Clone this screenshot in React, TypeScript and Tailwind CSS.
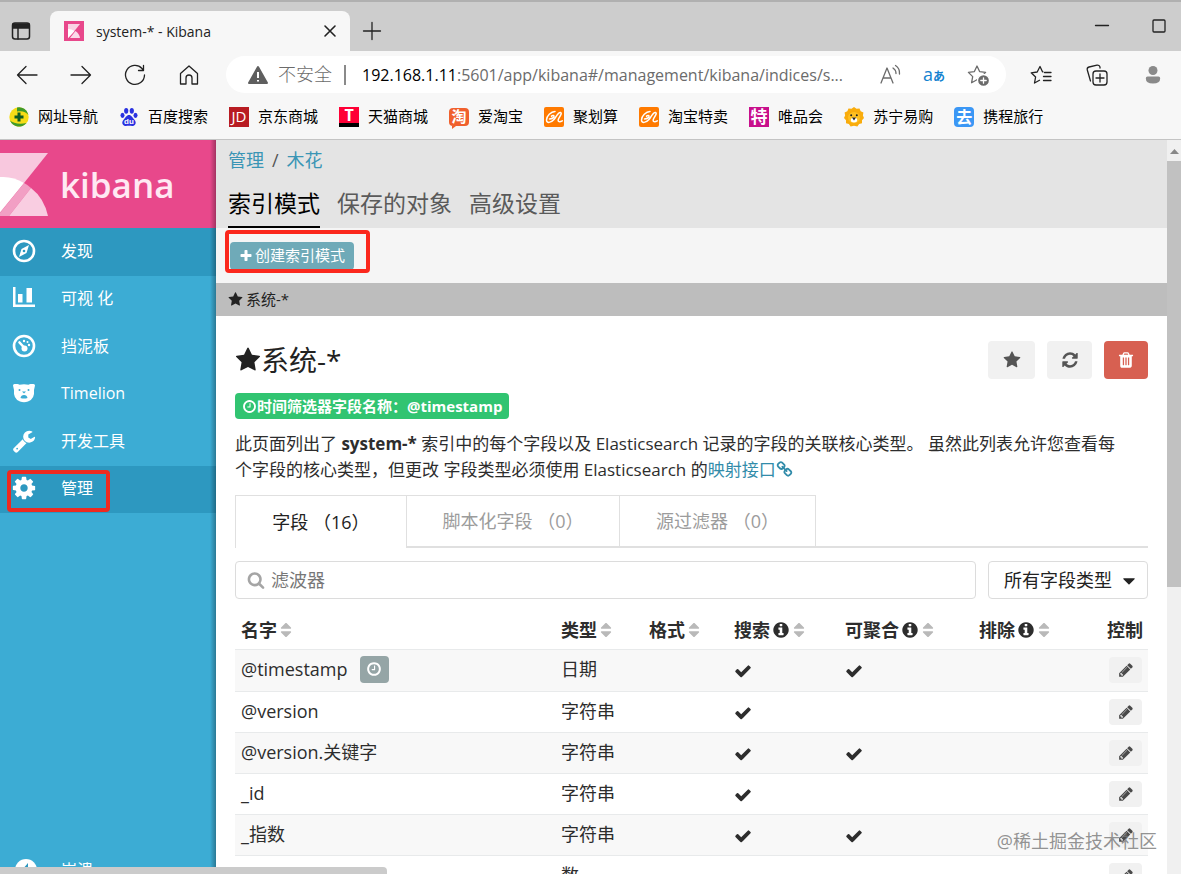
import type { ReactNode } from "react";

const paths = {
  check:
    "M1671 566q0 40-28 68l-724 724-136 136q-28 28-68 28t-68-28l-136-136-362-362q-28-28-28-68t28-68l136-136q28-28 68-28t68 28l294 295 656-657q28-28 68-28t68 28l136 136q28 28 28 68z",
  plus:
    "M1600 736v192q0 40-28 68t-68 28h-416v416q0 40-28 68t-68 28h-192q-40 0-68-28t-28-68v-416h-416q-40 0-68-28t-28-68v-192q0-40 28-68t68-28h416v-416q0-40 28-68t68-28h192q40 0 68 28t28 68v416h416q40 0 68 28t28 68z",
  star:
    "M1728 647q0 22-26 48l-363 354 86 500q1 7 1 20 0 21-10.5 35.5t-30.5 14.5q-19 0-40-12l-449-236-449 236q-22 12-40 12-21 0-31.5-14.5t-10.5-35.5q0-6 2-20l86-500-364-354q-25-27-25-48 0-37 56-46l502-73 225-455q19-41 49-41t49 41l225 455 502 73q56 9 56 46z",
  trash:
    "M704 1376v-704q0-14-9-23t-23-9h-64q-14 0-23 9t-9 23v704q0 14 9 23t23 9h64q14 0 23-9t9-23zm256 0v-704q0-14-9-23t-23-9h-64q-14 0-23 9t-9 23v704q0 14 9 23t23 9h64q14 0 23-9t9-23zm256 0v-704q0-14-9-23t-23-9h-64q-14 0-23 9t-9 23v704q0 14 9 23t23 9h64q14 0 23-9t9-23zm-544-992h448l-48-117q-7-9-17-11h-317q-10 2-17 11zm928 32v64q0 14-9 23t-23 9h-96v948q0 83-47 143.5t-113 60.5h-832q-66 0-113-58.5t-47-141.5v-952h-96q-14 0-23-9t-9-23v-64q0-14 9-23t23-9h309l70-167q15-37 54-63t79-26h320q40 0 79 26t54 63l70 167h309q14 0 23 9t9 23z",
  refresh:
    "M1639 1056q0 5-1 7-64 268-268 434.5t-478 166.5q-146 0-282.5-55t-243.5-157l-129 129q-19 19-45 19t-45-19-19-45v-448q0-26 19-45t45-19h448q26 0 45 19t19 45-19 45l-137 137q71 66 161 102t187 36q134 0 250-65t186-179q11-17 53-117 8-23 30-23h192q13 0 22.5 9.5t9.5 22.5zm25-800v448q0 26-19 45t-45 19h-448q-26 0-45-19t-19-45 19-45l138-138q-148-137-349-137-134 0-250 65t-186 179q-11 17-53 117-8 23-30 23h-199q-13 0-22.5-9.5t-9.5-22.5v-7q65-268 270-434.5t480-166.5q146 0 284 55.5t245 156.5l130-129q19-19 45-19t45 19 19 45z",
  clock:
    "M1024 544v448q0 14-9 23t-23 9h-320q-14 0-23-9t-9-23v-64q0-14 9-23t23-9h224v-352q0-14 9-23t23-9h64q14 0 23 9t9 23zm416 352q0-148-73-273t-198-198-273-73-273 73-198 198-73 273 73 273 198 198 273 73 273-73 198-198 73-273zm224 0q0 209-103 385.5t-279.5 279.5-385.5 103-385.5-103-279.5-279.5-103-385.5 103-385.5 279.5-279.5 385.5-103 385.5 103 279.5 279.5 103 385.5z",
  info:
    "M1152 1376v-160q0-14-9-23t-23-9h-96v-512q0-14-9-23t-23-9h-320q-14 0-23 9t-9 23v160q0 14 9 23t23 9h96v320h-96q-14 0-23 9t-9 23v160q0 14 9 23t23 9h448q14 0 23-9t9-23zm-128-896v-160q0-14-9-23t-23-9h-192q-14 0-23 9t-9 23v160q0 14 9 23t23 9h192q14 0 23-9t9-23zm640 416q0 209-103 385.5t-279.5 279.5-385.5 103-385.5-103-279.5-279.5-103-385.5 103-385.5 279.5-279.5 385.5-103 385.5 103 279.5 279.5 103 385.5z",
  pencil:
    "M491 1536l91-91-235-235-91 91v107h128v128h107zm523-928q0-22-22-22-10 0-17 7l-542 542q-7 7-7 17 0 22 22 22 10 0 17-7l542-542q7-7 7-17zm-54-192l416 416-832 832h-416v-416zm683 96q0 53-37 90l-166 166-416-416 166-165q36-38 90-38 53 0 91 38l235 234q37 39 37 91z",
  search:
    "M1216 832q0-185-131.5-316.5t-316.5-131.5-316.5 131.5-131.5 316.5 131.5 316.5 316.5 131.5 316.5-131.5 131.5-316.5zm512 832q0 52-38 90t-90 38q-54 0-90-38l-343-342q-179 124-399 124-143 0-273.5-55.5t-225-150-150-225-55.5-273.5 55.5-273.5 150-225 225-150 273.5-55.5 273.5 55.5 225 150 150 225 55.5 273.5q0 220-124 399l343 343q37 37 37 90z",
  sort:
    "M1408 1088q0 26-19 45l-448 448q-19 19-45 19t-45-19l-448-448q-19-19-19-45t19-45 45-19h896q26 0 45 19t19 45zm0-384q0 26-19 45t-45 19h-896q-26 0-45-19t-19-45 19-45l448-448q19-19 45-19t45 19l448 448q19 19 19 45z",
  caret: "M1408 704q0 26-19 45l-448 448q-19 19-45 19t-45-19l-448-448q-19-19-19-45t19-45 45-19h896q26 0 45 19t19 45z",
  link:
    "M1520 1216q0-40-28-68l-208-208q-28-28-68-28-42 0-72 32 3 3 19 18.5t21.5 21.5 15 19 13 25.5 3.5 27.5q0 40-28 68t-68 28q-15 0-27.5-3.5t-25.5-13-19-15-21.5-21.5-18.5-19q-33 31-33 73 0 40 28 68l206 207q27 27 68 27 40 0 68-26l147-146q28-28 28-67zm-703-705q0-40-28-68l-206-207q-28-28-68-28-39 0-68 27l-147 146q-28 28-28 67 0 40 28 68l208 208q27 27 68 27 42 0 72-31-3-3-19-18.5t-21.5-21.5-15-19-13-25.5-3.5-27.5q0-40 28-68t68-28q15 0 27.5 3.5t25.5 13 19 15 21.5 21.5 18.5 19q33-31 33-73zm895 705q0 120-85 203l-147 146q-83 83-203 83-121 0-204-85l-206-207q-83-83-83-203 0-123 88-209l-88-88q-86 88-208 88-120 0-204-84l-208-208q-84-84-84-204t85-203l147-146q83-83 203-83 121 0 204 85l206 207q83 83 83 203 0 123-88 209l88 88q86-88 208-88 120 0 204 84l208 208q84 84 84 204z",
  wrench:
    "M448 1472q0-26-19-45t-45-19-45 19-19 45 19 45 45 19 45-19 19-45zm644-420l-682 682q-37 37-90 37-52 0-91-37l-106-108q-38-36-38-90 0-53 38-91l681-681q39 98 114.5 173.5t173.5 114.5zm634-435q0 39-23 106-47 134-164.5 217.5t-258.5 83.5q-185 0-316.5-131.5t-131.5-316.5 131.5-316.5 316.5-131.5q58 0 121.5 16.5t107.5 46.5q16 11 16 28t-16 28l-293 169v224l193 107q5-3 79-48.5t135.5-81 70.5-35.5q15 0 23.5 10t8.5 25z",
  gear:
    "M1152 896q0-106-75-181t-181-75-181 75-75 181 75 181 181 75 181-75 75-181zm512-109v222q0 12-8 23t-20 13l-185 28q-19 54-39 91 35 50 107 138 10 12 10 25t-9 23q-27 37-99 108t-94 71q-12 0-26-9l-138-108q-44 23-91 38-16 136-29 186-7 28-36 28h-222q-14 0-24.5-8.5t-11.5-21.5l-28-184q-49-16-90-37l-141 107q-10 9-25 9-14 0-25-11-126-114-165-168-7-10-7-23 0-12 8-23 15-21 51-66.5t54-70.5q-27-50-41-99l-183-27q-13-2-21-12.5t-8-23.5v-222q0-12 8-23t19-13l186-28q14-46 39-92-40-57-107-138-10-12-10-24 0-10 9-23 26-36 98.5-107.5t94.5-71.5q13 0 26 10l138 107q44-23 91-38 16-136 29-186 7-28 36-28h222q14 0 24.5 8.5t11.5 21.5l28 184q49 16 90 37l142-107q9-9 24-9 13 0 25 10 129 119 165 170 7 8 7 22 0 12-8 23-15 21-51 66.5t-54 70.5q26 50 41 98l183 28q13 2 21 12.5t8 23.5z",
};

function Glyph({ name, className = "size-4" }: { name: keyof typeof paths; className?: string }) {
  return (
    <svg viewBox="0 0 1792 1792" className={`inline-block shrink-0 ${className}`} fill="currentColor" aria-hidden="true">
      <path d={paths[name]} />
    </svg>
  );
}

function Line({ children, className = "size-6", width = 1.3 }: { children: ReactNode; className?: string; width?: number }) {
  return (
    <svg
      viewBox="0 0 24 24"
      className={`shrink-0 ${className}`}
      fill="none"
      stroke="currentColor"
      strokeWidth={width}
      strokeLinecap="round"
      strokeLinejoin="round"
      aria-hidden="true"
    >
      {children}
    </svg>
  );
}

const starOutline = "M11 3l2.6 5.6 6 .8-4.4 4.2 1.1 6.1-5.300-3-5.400 3 1.100-6.100L2.400 9.400l6-.8z";

/* ── Bookmark icons ── */

function AliIcon() {
  return (
    <svg viewBox="0 0 20 20" className="size-5" aria-hidden="true">
      <rect width="20" height="20" rx="2" fill="#ff7a00" />
      <path
        d="M11 4.500C7 4.500 2.500 9 2.500 13c0 3.500 4.500 3 7.500-.5 2.500-3 4-7.500 6.500-7 2.200.6-1.500 5-2.200 7-.8 2.600 1.700 2.600 4 1.300M5.500 12c2.500-.2 5-1.500 4.500-3-.3-.8-1.500-.6-2.500.2"
        fill="none"
        stroke="#fff"
        strokeWidth="1.500"
        strokeLinecap="round"
      />
    </svg>
  );
}

function NavSiteIcon() {
  return (
    <svg viewBox="0 0 20 20" className="size-5" aria-hidden="true">
      <circle cx="10" cy="10" r="9.700" fill="#f6dc17" />
      <path d="M8 .5A9.700 9.700 0 0 1 19.500 8c-2.500-3-6-4.500-11.500-3.500z" fill="#3f9a2a" />
      <path d="M1 13.500c3 3 10 4 16.500 2.500A9.700 9.700 0 0 1 1 13.500z" fill="#3f9a2a" />
      <path d="M10 5.500v9M5.500 10h9" stroke="#0d5a23" strokeWidth="3" />
    </svg>
  );
}

function BaiduIcon() {
  return (
    <svg viewBox="0 0 20 20" className="size-5" fill="#2a32e0" aria-hidden="true">
      <ellipse cx="7.200" cy="3.800" rx="2.100" ry="2.900" />
      <ellipse cx="12.800" cy="3.800" rx="2.100" ry="2.900" />
      <ellipse cx="3.500" cy="8.300" rx="2" ry="2.600" />
      <ellipse cx="16.500" cy="8.300" rx="2" ry="2.600" />
      <path d="M10 8c2.500 0 3.200 2.500 5 4.200 2 1.900 2.200 4 1 5.600-1.400 1.800-3.800 1-6 1s-4.600.8-6-1c-1.200-1.600-1-3.700 1-5.600C6.800 10.500 7.500 8 10 8z" />
      <text x="10" y="17" textAnchor="middle" fontSize="8" fontWeight="700" fill="#fff" fontFamily="Liberation Sans, sans-serif">
        du
      </text>
    </svg>
  );
}

function LionIcon() {
  return (
    <svg viewBox="0 0 20 20" className="size-5" aria-hidden="true">
      <path
        d="M10 0l2.500 1.700 3-.3 1.200 2.800 2.700 1.400-.5 3L20 11l-2 2.200v3l-2.900.9-1.700 2.500L10 18.800l-3.400.8-1.700-2.500-2.900-.9v-3L0 11l1.100-2.400-.5-3 2.700-1.400 1.200-2.800 3 .3z"
        fill="#f9ac0c"
      />
      <ellipse cx="10" cy="10.500" rx="6" ry="5.500" fill="#ffc021" />
      <ellipse cx="10" cy="13" rx="3.200" ry="2.500" fill="#fff" />
      <circle cx="7.200" cy="8.300" r="1" fill="#222" />
      <circle cx="12.800" cy="8.300" r="1" fill="#222" />
      <path d="M8 10.600h4L10 13.500z" fill="#222" />
    </svg>
  );
}

function TaobaoIcon() {
  return (
    <span className="relative flex h-[18px] w-5 items-center justify-center rounded bg-[#f0602d] text-[15px] leading-none font-bold text-white">
      淘
      <span className="absolute top-full left-[3px] border-t-3 border-r-4 border-t-[#f0602d] border-r-transparent" />
    </span>
  );
}

const tile = "flex size-5 items-center justify-center overflow-hidden leading-none text-white";

const bookmarks: { label: string; icon: ReactNode }[] = [
  { label: "网址导航", icon: <NavSiteIcon /> },
  { label: "百度搜索", icon: <BaiduIcon /> },
  { label: "京东商城", icon: <span className={`${tile} bg-[#b81c22] text-[15px]`}>JD</span> },
  { label: "天猫商城", icon: <span className={`${tile} border-b-4 border-black bg-[#ff0036] text-[16px] font-bold`}>T</span> },
  { label: "爱淘宝", icon: <TaobaoIcon /> },
  { label: "聚划算", icon: <AliIcon /> },
  { label: "淘宝特卖", icon: <AliIcon /> },
  { label: "唯品会", icon: <span className={`${tile} bg-[#c8108c] text-[17px] font-bold`}>特</span> },
  { label: "苏宁易购", icon: <LionIcon /> },
  { label: "携程旅行", icon: <span className={`${tile} rounded-sm bg-[#3b97f5] text-[16px] font-bold`}>去</span> },
];

/* ── Browser chrome ── */

function TabStrip() {
  return (
    <div className="flex h-[51px] items-end border-t-2 border-[#b0b0b0] bg-[#cdcdcd]">
      <button aria-label="标签页操作" className="flex h-10 w-[50px] items-center pl-[9px]">
        <Line width={1.5}>
          <rect x="3.500" y="4" width="17" height="16" rx="2.500" />
          <path d="M4 5h16v4H4z" fill="currentColor" />
          <path d="M9 9v11" />
        </Line>
      </button>
      <div className="flex h-10 w-[300px] items-center rounded-t-lg bg-[#f7f7f7] pr-2 pl-[14px]">
        <svg viewBox="0 0 20 20" className="size-5" aria-hidden="true">
          <path fill="#e8488b" d="M0 0h20v20H0z" />
          <path fill="#f9d3e4" d="M4 3h12L8 13l-4 4z" />
          <path fill="#fff" d="M4 8q4 0 6.500 2L4 17z" />
          <path fill="#fbdcea" d="M11.500 10q4 3 4.500 7H6z" />
        </svg>
        <span className="ml-3 flex-1 text-[14px] text-[#222]">system-* - Kibana</span>
        <button aria-label="关闭标签页">
          <Line width={1.6}>
            <path d="M7 7l10 10M17 7L7 17" />
          </Line>
        </button>
      </div>
      <button aria-label="新建标签页" className="flex h-10 w-11 items-center justify-center">
        <Line>
          <path d="M12 3.500v17M3.500 12h17" />
        </Line>
      </button>
      <div className="mb-[13px] ml-auto flex">
        <button aria-label="最小化" className="flex w-[70px] justify-center">
          <Line>
            <path d="M5.500 11.500h13" />
          </Line>
        </button>
        <button aria-label="最大化" className="flex w-11 justify-center">
          <Line>
            <rect x="6" y="6" width="12" height="12" rx="1" />
          </Line>
        </button>
      </div>
    </div>
  );
}

function Toolbar() {
  const nav = "flex h-9 w-[54px] items-center justify-center";
  return (
    <div className="flex h-[47px] items-center bg-[#f7f7f7] text-[#222]">
      <button aria-label="返回" className={nav}>
        <Line><path d="M22 12H2.500M11 3.500L2.500 12l8.500 8.500" /></Line>
      </button>
      <button aria-label="前进" className={nav}>
        <Line><path d="M2 12h19.500M13 3.500l8.500 8.500-8.500 8.500" /></Line>
      </button>
      <button aria-label="刷新" className={nav}>
        <Line><path d="M21.500 12A9.500 9.500 0 1 1 19 5.500l1.500 2M20.500 2.500v5h-5" /></Line>
      </button>
      <button aria-label="主页" className={nav}>
        <Line>
          <path d="M3.500 10.500L12 3l8.500 7.500V21H15v-6a3 3 0 0 0-6 0v6H3.500z" />
        </Line>
      </button>
      <div className="mr-[7px] ml-[10px] flex h-[37px] min-w-0 flex-1 items-center rounded-full bg-white pl-[22px] text-[#6b6b6b]">
        <svg viewBox="0 0 20 20" className="size-5 shrink-0" aria-hidden="true">
          <path d="M10 2l9 16H1z" fill="#5f5f5f" stroke="#5f5f5f" strokeWidth="2" strokeLinejoin="round" />
          <path d="M10 7v6M10 15v1.500" stroke="#fff" strokeWidth="2" />
        </svg>
        <span className="ml-[10px] shrink-0 text-[18px] font-light">不安全</span>
        <span className="mx-3 h-5 w-0.5 shrink-0 bg-[#8a8a8a]" />
        <span className="min-w-0 flex-1 truncate pl-1 text-[16px]">
          <span className="text-black">192.168.1.11</span>:5601/app/kibana#/management/kibana/indices/s...
        </span>
        <button aria-label="大声朗读" className="flex w-11 justify-center">
          <Line>
            <path d="M3 20L9 5l6 15M5 15h8M15 5q3 2 3 5.500M17.500 2.500q4.500 3 4 8.500" />
          </Line>
        </button>
        <button aria-label="翻译" className="w-11 text-[#1482d0]">
          <span className="text-[18px]">a</span>
          <span className="text-[12px] font-bold">あ</span>
        </button>
        <button aria-label="添加到收藏夹" className="mr-[6px] flex w-11 justify-center">
          <Line>
            <path d={starOutline} />
            <circle cx="17.500" cy="17.500" r="6" fill="#6b6b6b" stroke="#fff" />
            <path d="M17.500 14.800v5.400M14.800 17.500h5.400" stroke="#fff" />
          </Line>
        </button>
      </div>
      <button aria-label="收藏夹" className="flex w-14 justify-center">
        <Line>
          <path d="M14 8.800h-.5L11 3.500 8.200 9l-6 .8 4.400 4.200-1.100 6 5-2.700M15.500 9.500H22M14.500 13.500H22M14.500 17.500H22" />
        </Line>
      </button>
      <button aria-label="集锦" className="flex w-14 justify-center">
        <Line>
          <rect x="8" y="8" width="14" height="14" rx="3" />
          <path d="M15 11v8M11 15h8M5.500 18L2.300 7a2.500 2.500 0 0 1 1.800-3L12 2.200a2.500 2.500 0 0 1 3 2V5" />
        </Line>
      </button>
      <button aria-label="个人资料" className="flex w-14 justify-center text-[#8a8a8a]">
        <svg viewBox="0 0 24 24" className="size-6" fill="currentColor" aria-hidden="true">
          <circle cx="12" cy="7.500" r="4.500" />
          <path d="M6.500 13.500h11q1.700 0 1.700 1.700 0 5.300-7.200 5.300t-7.200-5.300q0-1.700 1.700-1.700z" />
        </svg>
      </button>
    </div>
  );
}

function BookmarkBar() {
  return (
    <nav aria-label="收藏夹栏" className="flex h-[42px] items-center gap-[21px] border-b border-[#c4c4c4] bg-[#f7f7f7] pb-1 pl-[9px]">
      {bookmarks.map((b) => (
        <a key={b.label} href="#" className="flex shrink-0 items-center gap-[9px] text-[15px] text-black">
          {b.icon}
          {b.label}
        </a>
      ))}
    </nav>
  );
}

/* ── Kibana sidebar ── */

const sideItems: { label: string; icon: ReactNode; active?: boolean; marked?: boolean }[] = [
  {
    label: "发现",
    active: true,
    icon: (
      <Line width={2.6}>
        <circle cx="12" cy="12" r="10" />
        <path d="M17 6l-2.500 8L7 18l2.500-8z" fill="currentColor" stroke="none" />
        <circle cx="12" cy="12" r="1.300" fill="#2d98c0" stroke="none" />
      </Line>
    ),
  },
  {
    label: "可视 化",
    icon: (
      <svg viewBox="0 0 24 24" className="size-6" fill="currentColor" aria-hidden="true">
        <path d="M1 1h2.500v17.500H23V21H1zM6 8h4.500v8.500H6zM14.500 2H20v14.500h-5.500z" />
      </svg>
    ),
  },
  {
    label: "挡泥板",
    icon: (
      <Line width={2.6}>
        <circle cx="12" cy="12" r="10" />
        <path d="M7.500 8.500l5 5.500" />
        <circle cx="12.500" cy="14.500" r="3" fill="currentColor" stroke="none" />
        <circle cx="12" cy="7" r="1.200" fill="currentColor" stroke="none" />
        <circle cx="17" cy="11" r="1.200" fill="currentColor" stroke="none" />
        <circle cx="15.500" cy="8" r="1" fill="currentColor" stroke="none" />
      </Line>
    ),
  },
  {
    label: "Timelion",
    icon: (
      <svg viewBox="0 0 24 24" className="size-6" aria-hidden="true">
        <path
          d="M1 4.500Q1 3 2.500 3h3q1 0 2 .8 4.500-1 9 0 1-.8 2-.8h3Q23 3 23 4.500L22 9q1 9-6 11.500-4 1.500-8 0Q1 18 2 9z"
          fill="#fff"
        />
        <circle cx="7.500" cy="9" r="1" fill="#3cacd4" />
        <circle cx="16.500" cy="9" r="1" fill="#3cacd4" />
        <path d="M9.500 5.500h5M10 10.500h4L12 12.500zM8.500 17q.5-3 3.500-3t3.500 3q-3.500 1-7 0z" fill="#3cacd4" />
      </svg>
    ),
  },
  { label: "开发工具", icon: <Glyph name="wrench" className="size-6" /> },
  { label: "管理", icon: <Glyph name="gear" className="size-[26px]" />, active: true, marked: true },
];

function Sidebar() {
  return (
    <aside className="relative flex w-[216px] shrink-0 flex-col overflow-hidden bg-[#3cacd4] text-[16px] text-white">
      <div className="flex h-[88px] shrink-0 items-center bg-[#e8488b]">
        <svg viewBox="0 0 48 63" className="h-[63px] w-12" aria-hidden="true">
          <path d="M0 0h48L24 30 0 60z" fill="#f8c8de" />
          <path d="M0 24q13-1 24 6L0 59z" fill="#fff" />
          <path d="M24 30q4 2 7 5L9 63H0v-3z" fill="#f29fc4" />
          <path d="M31 35q13 10 17 28H9z" fill="#f9cde1" />
        </svg>
        <span className="ml-3 text-[35px] leading-none font-semibold text-[#ffe9f3]">kibana</span>
      </div>
      <nav aria-label="Kibana" className="grid h-[285px] shrink-0 grid-rows-6">
        {sideItems.map((item) => (
          <a
            key={item.label}
            href="#"
            className={`relative flex items-center pb-[2px] ${item.active ? "bg-[#2d98c0]" : ""}`}
          >
            <span className="flex w-[61px] justify-start pl-3">
              <span className="flex w-6 justify-center">{item.icon}</span>
            </span>
            {item.label}
            {item.marked && (
              <span className="absolute top-1 left-[7px] h-[42px] w-[103px] rounded border-4 border-[#ee2a20]" />
            )}
          </a>
        ))}
      </nav>
      <a href="#" className="mt-auto -mb-5 flex h-12 shrink-0 items-center">
        <span className="flex w-[61px] pl-[14px]">
          <svg viewBox="0 0 24 24" className="size-6" aria-hidden="true">
            <circle cx="12" cy="12" r="11" fill="#fff" />
            <path d="M14 5l-6 7 6 7z" fill="#2d98c0" />
          </svg>
        </span>
        崩溃
      </a>
      <span className="absolute inset-y-0 right-0 w-[6px] bg-linear-to-r from-transparent to-black/30" />
    </aside>
  );
}

/* ── Index pattern page ── */

const columns = [
  { label: "名字", sort: true },
  { label: "类型", sort: true, width: "w-[88px]" },
  { label: "格式", sort: true, width: "w-[85px]" },
  { label: "搜索", sort: true, info: true, width: "w-[111px]" },
  { label: "可聚合", sort: true, info: true, width: "w-[134px]" },
  { label: "排除", sort: true, info: true, width: "w-[128px]" },
  { label: "控制", width: "w-[47px]" },
];

const rows = [
  { name: "@timestamp", type: "日期", searchable: true, aggregatable: true, time: true },
  { name: "@version", type: "字符串", searchable: true },
  { name: "@version.关键字", type: "字符串", searchable: true, aggregatable: true },
  { name: "_id", type: "字符串", searchable: true },
  { name: "_指数", type: "字符串", searchable: true, aggregatable: true },
  { name: "", type: "数" },
];

function FieldTable() {
  const cell = "px-[6px] pt-[6px] pb-2";
  return (
    <table className="mt-3 w-full table-fixed text-left text-[18px] leading-[26px] text-[#2d2d2d]">
      <thead>
        <tr className="h-[38px]">
          {columns.map((c) => (
            <th key={c.label} scope="col" className={`px-[6px] font-bold whitespace-nowrap ${c.width ?? ""}`}>
              <span className="flex items-center">
                {c.label}
                {c.info && <Glyph name="info" className="ml-[2px] size-[18px]" />}
                {c.sort && <Glyph name="sort" className="size-[18px] text-[#b9b9b9]" />}
              </span>
            </th>
          ))}
        </tr>
      </thead>
      <tbody>
        {rows.map((r) => (
          <tr key={r.name} className="border-t border-[#e8eaeb] odd:bg-[#f8f8f8]">
            <td className={cell}>
              <span className="flex items-center">
                {r.name}
                {r.time && (
                  <span className="ml-3 flex h-[27px] w-[29px] items-center justify-center rounded-sm bg-[#95a5a6] text-white">
                    <Glyph name="clock" />
                  </span>
                )}
              </span>
            </td>
            <td className={cell}>{r.type}</td>
            <td />
            <td className={cell}>{r.searchable && <Glyph name="check" className="block size-[18px]" />}</td>
            <td className={cell}>{r.aggregatable && <Glyph name="check" className="block size-[18px]" />}</td>
            <td />
            <td className="pl-2">
              <button aria-label="编辑" className="flex h-[26px] w-[33px] items-center justify-center rounded bg-[#f1f1f1] text-[#4a4a4a]">
                <Glyph name="pencil" />
              </button>
            </td>
          </tr>
        ))}
      </tbody>
    </table>
  );
}

function IndexPattern() {
  const tab = "flex items-center justify-center border-t border-r border-[#e0e0e0]";
  const idle = "border-b-2 text-[#9c9c9c]";
  return (
    <section className="px-[19px] pt-[25px]">
      <div className="flex h-[38px] items-center">
        <h1 className="flex items-center text-[28px]">
          <Glyph name="star" className="size-[26px]" />
          系统-*
        </h1>
        <div className="ml-auto flex gap-3 text-[#555]">
          <button aria-label="设为默认" className="flex h-[38px] w-[47px] items-center justify-center rounded bg-[#f1f1f1]">
            <Glyph name="star" className="size-[18px]" />
          </button>
          <button aria-label="刷新字段" className="flex h-[38px] w-[45px] items-center justify-center rounded bg-[#f1f1f1]">
            <Glyph name="refresh" className="size-[18px]" />
          </button>
          <button aria-label="删除" className="flex h-[38px] w-[44px] items-center justify-center rounded bg-[#d76051] text-white">
            <Glyph name="trash" className="size-[18px]" />
          </button>
        </div>
      </div>
      <div className="mt-[14px] flex">
        <span className="flex h-[26px] items-center rounded-sm bg-[#31c471] px-[7px] text-[15px] font-bold text-white">
          <Glyph name="clock" className="size-[15px]" />
          时间筛选器字段名称：@timestamp
        </span>
      </div>
      <p className="mt-3 pr-5 text-[17px] leading-[26px] text-[#2d2d2d]">
        此页面列出了 <strong>system-*</strong> 索引中的每个字段以及 Elasticsearch 记录的字段的关联核心类型。
        虽然此列表允许您查看每个字段的核心类型，但更改 字段类型必须使用 Elasticsearch 的
        <a href="#" className="text-[#328caa]">
          映射接口
          <Glyph name="link" className="size-[17px] align-[-2px]" />
        </a>
      </p>
      <div role="tablist" className="mt-3 flex h-[53px] text-[18px]">
        <button role="tab" aria-selected="true" className={`${tab} w-[172px] border-l`}>
          字段 （16）
        </button>
        <button role="tab" aria-selected="false" className={`${tab} ${idle} w-[213px]`}>
          脚本化字段 （0）
        </button>
        <button role="tab" aria-selected="false" className={`${tab} ${idle} w-[196px]`}>
          源过滤器 （0）
        </button>
        <span className="flex-1 border-b-2 border-[#e0e0e0]" />
      </div>
      <div className="mt-[13px] flex gap-3 text-[18px]">
        <label className="flex h-[38px] flex-1 items-center rounded border border-[#dcdcdc] pl-[11px]">
          <Glyph name="search" className="size-[18px] text-[#a5a5a5]" />
          <input aria-label="滤波器" placeholder="滤波器" className="ml-[6px] flex-1 outline-none placeholder:text-[#777]" />
        </label>
        <div className="relative">
          <select aria-label="字段类型" className="h-[38px] w-40 appearance-none rounded border border-[#dcdcdc] bg-white pl-[15px]">
            <option>所有字段类型</option>
          </select>
          <Glyph name="caret" className="pointer-events-none absolute top-[10px] right-[9px] size-5" />
        </div>
      </div>
      <FieldTable />
    </section>
  );
}

function Content() {
  return (
    <main className="min-w-0 flex-1 overflow-hidden">
      <header className="h-[88px] bg-[#e4e4e4] px-3 pt-[7px]">
        <nav aria-label="路径" className="flex gap-2 text-[18px] leading-[26px] text-[#3a95b5]">
          <a href="#">管理</a>
          <span className="text-[#555]">/</span>
          <a href="#">木花</a>
        </nav>
        <nav aria-label="管理" className="mt-[10px] flex h-[45px] gap-[17px] text-[23px] leading-10 text-[#5a5a5a]">
          <a href="#" className="border-b-2 border-black text-black">索引模式</a>
          <a href="#">保存的对象</a>
          <a href="#">高级设置</a>
        </nav>
      </header>
      <div className="relative flex h-[55px] items-center bg-[#f5f5f5] px-[14px]">
        <button className="flex h-7 items-center gap-[2px] rounded bg-[#6faab8] px-[9px] text-[15px] text-white">
          <Glyph name="plus" className="size-[14px]" />
          创建索引模式
        </button>
        <span className="absolute top-[2px] left-[9px] h-[43px] w-[145px] rounded border-4 border-[#fb281d]" />
      </div>
      <a href="#" className="flex h-[33px] items-center gap-[3px] bg-[#bdbdbd] px-3 text-[15px]">
        <Glyph name="star" className="size-[15px]" />
        系统-*
      </a>
      <IndexPattern />
    </main>
  );
}

export default function App() {
  return (
    <div className="relative flex h-screen flex-col overflow-hidden bg-white font-['Open_Sans','Noto_Sans_CJK_SC',sans-serif] text-[#222]">
      <TabStrip />
      <Toolbar />
      <BookmarkBar />
      <div className="flex min-h-0 flex-1">
        <Sidebar />
        <Content />
        {/* Page scrollbar */}
        <div className="flex w-[14px] shrink-0 flex-col bg-[#f0f0f0]">
          <svg viewBox="0 0 14 21" className="h-[21px]" aria-hidden="true">
            <path d="M3 14l4.500-5 4.500 5z" fill="#888" />
          </svg>
          <span className="h-[58%] bg-[#c1c1c1]" />
        </div>
      </div>
      {/* Status bubble */}
      <span className="absolute bottom-0 left-0 h-[7px] w-[387px] rounded-tr bg-[#cbcbcb]" />
      <span className="absolute right-6 bottom-5 text-[18px] leading-[26px] text-[#777]/80">@稀土掘金技术社区</span>
    </div>
  );
}
